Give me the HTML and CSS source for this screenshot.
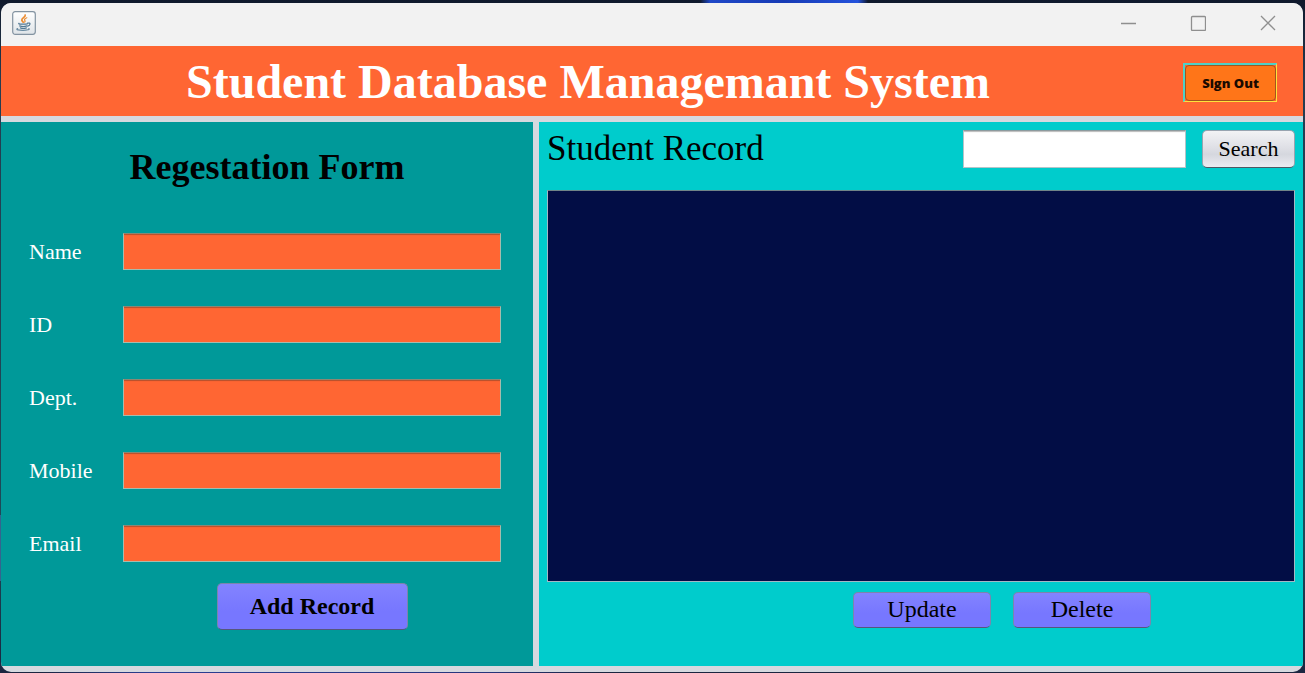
FILE: index.html
```html
<!DOCTYPE html>
<html lang="en">
<head>
<meta charset="utf-8">
<title>Student Database Managemant System</title>
<link rel="stylesheet" href="styles.css">
</head>
<body>
<div class="window">
  <div class="titlebar">
    <svg class="app-icon" width="24" height="24" viewBox="0 0 24 24" aria-hidden="true">
      <defs>
        <linearGradient id="tile" x1="0" y1="0" x2="0" y2="1">
          <stop offset="0" stop-color="#fff"/>
          <stop offset="1" stop-color="#dfe4e8"/>
        </linearGradient>
      </defs>
      <rect x="0.7" y="0.7" width="22.6" height="22.6" rx="2.5" fill="url(#tile)" stroke="#8393a1" stroke-width="1.2"/>
      <g fill="none" stroke-linecap="round">
        <path d="M13.200 4c.6 2.200-3.900 3.100-3.400 5.200.2.900 1.200 1.300 1.400 2" stroke="#ea8a2e" stroke-width="1.700"/>
        <path d="M14.800 6.800c-2 .8-2.900 1.600-1.900 2.800.4.500.2 1-.2 1.400" stroke="#ea8a2e" stroke-width="1.200"/>
        <path d="M7 12.300c-1.200.7 1.800 1 4.200.9 2.200 0 3.700-.2 4.500-.5M7.700 14.900c1.800.8 5.400.7 7.200 0M8.400 16.900c1.500.6 4.500.6 6 0" stroke="#527994" stroke-width="1.200"/>
        <path d="M15.600 12.200c3.400-1 3 2.300.1 3" stroke="#527994" stroke-width="1.200"/>
        <path d="M5.600 17.600c-2.500 1.100 1.900 1.800 5.600 1.700 3.600-.1 7.200-.8 5.600-1.700" stroke="#6c8ca2" stroke-width="1.200"/>
      </g>
    </svg>
    <div class="window-controls">
      <button type="button" aria-label="Minimize"><svg width="16" height="16" viewBox="0 0 16 16"><path d="M1 8.500h15"/></svg></button>
      <button type="button" aria-label="Maximize"><svg width="16" height="16" viewBox="0 0 16 16"><rect x="1.500" y="1.500" width="14" height="14" rx="1"/></svg></button>
      <button type="button" aria-label="Close"><svg width="16" height="16" viewBox="0 0 16 16"><path d="M1 1l14 14M15 1L1 15"/></svg></button>
    </div>
  </div>

  <header class="banner">
    <h1>Student Database Managemant System</h1>
    <button class="sign-out" type="button"><span>Sign Out</span></button>
  </header>

  <main class="panels">
    <form class="panel registration">
      <h2>Regestation Form</h2>
      <div class="fields">
        <label for="name">Name</label><input id="name" type="text">
        <label for="sid">ID</label><input id="sid" type="text">
        <label for="dept">Dept.</label><input id="dept" type="text">
        <label for="mobile">Mobile</label><input id="mobile" type="text">
        <label for="email">Email</label><input id="email" type="text">
      </div>
      <div class="submit-row">
        <button class="action add" type="button">Add Record</button>
      </div>
    </form>

    <section class="panel records">
      <div class="records-head">
        <h2>Student Record</h2>
        <input class="query" type="text" aria-label="Search records">
        <button class="search" type="button">Search</button>
      </div>
      <div class="record-list"></div>
      <div class="record-actions">
        <button class="action" type="button">Update</button>
        <button class="action" type="button">Delete</button>
      </div>
    </section>
  </main>
</div>
</body>
</html>
```
FILE: styles.css
```css
* { box-sizing: border-box; }

body {
  margin: 0;
  min-height: 100vh;
  display: flex;
  padding: 3px 2px 1px 1px;
  background:
    linear-gradient(90deg, transparent, #1f48c8 6%, #173bb5 50%, #2452dc 94%, transparent) 700px 0 / 168px 3px no-repeat,
    linear-gradient(90deg, transparent, #2b3f94 20%, #27357c 80%, transparent) 40px 100% / 560px 1px no-repeat,
    linear-gradient(#35648f, #35648f) 0 515px / 1px 66px no-repeat,
    linear-gradient(#10192c, #263c50 12%, #1d4a58 80%, #1b2540);
  font-family: "Liberation Serif", "Times New Roman", serif;
  color: #000;
}

h1, h2 { margin: 0; }
button, input { font-family: inherit; margin: 0; }

.window {
  flex: 1;
  display: flex;
  flex-direction: column;
  border-radius: 10px;
  overflow: hidden;
  background: #d6d9df;
}

/* Title bar */
.titlebar {
  height: 43px;
  padding: 0 15px 0 11px;
  display: flex;
  align-items: center;
  justify-content: space-between;
  background: #f2f2f2;
}
.app-icon { margin-bottom: 4px; }
.window-controls {
  display: flex;
  gap: 30px;
  padding-bottom: 3px;
}
.window-controls button {
  width: 40px;
  height: 32px;
  padding: 0;
  border: 0;
  background: none;
  display: grid;
  place-items: center;
}
.window-controls svg {
  fill: none;
  stroke: #8f8f8f;
  stroke-width: 1.3;
}

/* Banner */
.banner {
  min-height: 70px;
  padding: 2px 26px 0 0;
  display: flex;
  align-items: center;
  gap: 8px;
  background: #ff6633;
}
.banner h1 {
  flex: 1;
  text-align: center;
  font-size: 48px;
  line-height: 56px;
  color: #fff;
}
.sign-out {
  width: 94px;
  height: 39px;
  padding: 0;
  border: solid;
  border-width: 2px 1px 1px 2px;
  border-color: #4fd0c8 #ffe23c #ffe23c #4fd0c8;
  background: #ff6633;
  font: 800 13px/16px "Open Sans", sans-serif;
  color: #1a0a00;
}
.sign-out span {
  height: 100%;
  display: grid;
  place-items: center;
  border: 1px solid #a5541f;
  border-radius: 4px;
  background: #ff7518;
}

/* Panels */
.panels {
  flex: 1;
  display: grid;
  grid-template-columns: 532fr 764fr;
  gap: 6px;
  padding: 6px 0;
}
.panel { display: flex; flex-direction: column; }

.registration {
  padding: 24px 28px 36px;
  background: #009999;
}
.registration h2 {
  text-align: center;
  font-size: 36px;
  line-height: 42px;
}
.fields, .submit-row {
  display: grid;
  grid-template-columns: 94px 1fr;
  padding-right: 4px;
}
.fields {
  margin-top: 45px;
  row-gap: 36px;
  align-items: center;
}
.fields label {
  font-size: 22px;
  line-height: 26px;
  color: #fff;
}
.fields input {
  width: 100%;
  height: 37px;
  padding: 0 6px;
  border: 1px solid #a5bcae;
  border-top-color: #8d8672;
  border-radius: 0;
  background: #ff6633;
  box-shadow: inset 0 2px 1px -1px #b4502d;
  font-size: 22px;
}
.submit-row { margin-top: 21px; }

.action {
  width: 138px;
  height: 36px;
  padding: 0 0 2px;
  border: 1px solid #7c84ac;
  border-bottom-color: #56567c;
  border-radius: 5px;
  background: linear-gradient(#8383ff, #7777ff 60%);
  font-size: 24px;
  line-height: 28px;
  color: #000;
}
.action.add {
  grid-column: 2;
  justify-self: center;
  width: 191px;
  height: 47px;
  font-weight: bold;
}

.records {
  padding: 8px 8px 38px;
  background: #00cccc;
}
.records-head {
  display: flex;
  align-items: center;
  gap: 16px;
}
.records-head h2 {
  flex: 1;
  font-size: 35px;
  line-height: 38px;
  font-weight: normal;
}
.query {
  width: 223px;
  height: 38px;
  padding: 0 6px;
  border: 1px solid #b4c4c8;
  border-top-color: #8c9a9e;
  background: #fff;
  box-shadow: inset 0 2px 1px -1px #bbb;
  font-size: 22px;
}
.search {
  width: 93px;
  height: 38px;
  padding: 0;
  border: 1px solid #98a4b0;
  border-bottom-color: #4f5864;
  border-radius: 5px;
  background: linear-gradient(#f2f3f5, #dfe0e6 45%, #d5d7de 65%, #ebecf1);
  font-size: 22px;
  line-height: 26px;
  color: #000;
}
.record-list {
  flex: 1;
  min-height: 200px;
  margin-top: 22px;
  border: 1px solid #a3b8c4;
  border-top-color: #6f8488;
  background: #020d45;
}
.record-actions {
  display: flex;
  justify-content: flex-end;
  gap: 22px;
  margin-top: 10px;
  padding-right: 144px;
}
```
